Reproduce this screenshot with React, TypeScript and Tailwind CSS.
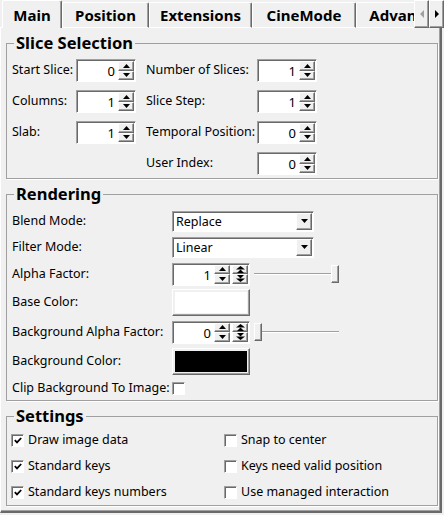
import React from 'react'

const raised =
  'border border-t-white border-l-white border-b-[#696969] border-r-[#696969] shadow-[inset_-1px_-1px_0_#a0a0a0] bg-[#f0f0f0]'
const sunken =
  'border border-t-[#a0a0a0] border-l-[#a0a0a0] border-b-white border-r-white shadow-[inset_1px_1px_0_#696969]'

function Tri({ dir, color = '#000' }: { dir: 'up' | 'down' | 'left' | 'right'; color?: string }) {
  const pts: Record<string, string> = {
    up: '0,4 7,4 3.5,0',
    down: '0,0 7,0 3.5,4',
    left: '4,0 4,8 0,4',
    right: '0,0 0,8 4,4',
  }
  const vertical = dir === 'up' || dir === 'down'
  return (
    <svg width={vertical ? 7 : 4} height={vertical ? 4 : 8} viewBox={vertical ? '0 0 7 4' : '0 0 4 8'}>
      <polygon points={pts[dir]} fill={color} />
    </svg>
  )
}

function DoubleTri({ dir }: { dir: 'up' | 'down' }) {
  return (
    <svg width="9" height="7" viewBox="0 0 9 7">
      {dir === 'up' ? (
        <>
          <polygon points="0,3.5 9,3.5 4.5,0" fill="#000" />
          <polygon points="1,7 8,7 4.5,3.5" fill="#000" />
        </>
      ) : (
        <>
          <polygon points="0,3.5 9,3.5 4.5,7" fill="#000" />
          <polygon points="1,0 8,0 4.5,3.5" fill="#000" />
        </>
      )}
    </svg>
  )
}

function SpinButtons({ double = false }: { double?: boolean }) {
  return (
    <div className="flex flex-col w-[16px] h-full">
      <div className={`flex-1 flex items-center justify-center ${raised}`}>
        {double ? <DoubleTri dir="up" /> : <Tri dir="up" />}
      </div>
      <div className={`flex-1 flex items-center justify-center ${raised}`}>
        {double ? <DoubleTri dir="down" /> : <Tri dir="down" />}
      </div>
    </div>
  )
}

function Spin({ value, double = false }: { value: string; double?: boolean }) {
  return (
    <div className={`flex h-[23px] bg-white ${sunken} ${double ? 'w-[78px]' : 'w-[60px]'}`}>
      <div className="flex-1 text-right pr-[3px] pt-[1px] leading-[20px] text-[13px]">{value}</div>
      <div className="flex gap-[2px] py-[1px] pr-[1px]">
        <SpinButtons />
        {double && <SpinButtons double />}
      </div>
    </div>
  )
}

function Slider({ at }: { at: 'start' | 'end' }) {
  const handle = <div className={`w-[8px] h-[18px] shrink-0 ${raised}`} />
  return (
    <div className="flex items-center w-[85px] h-[22px]">
      {at === 'start' && handle}
      <div className="flex-1 h-[2px] border-t border-t-[#a0a0a0] border-b border-b-white" />
      {at === 'end' && handle}
    </div>
  )
}

function Combo({ value }: { value: string }) {
  return (
    <div className={`flex w-[142px] h-[21px] bg-white ${sunken}`}>
      <div className="flex-1 pl-[3px] leading-[19px]">{value}</div>
      <div className="p-[1px]">
        <div className={`w-[16px] h-full flex items-center justify-center ${raised}`}>
          <Tri dir="down" />
        </div>
      </div>
    </div>
  )
}

function ColorButton({ color }: { color: string }) {
  return (
    <div className={`w-[78px] h-[27px] p-[2px] ${raised}`}>
      <div className={`w-full h-full ${color}`} />
    </div>
  )
}

function CheckBox({ checked }: { checked: boolean }) {
  return (
    <div className={`w-[13px] h-[13px] shrink-0 bg-white flex items-center justify-center ${sunken}`}>
      {checked && (
        <svg width="8" height="7" viewBox="0 0 8 7">
          <path d="M0.8 3.2 L3 5.4 L7.2 1" stroke="#000" strokeWidth="1.8" fill="none" />
        </svg>
      )}
    </div>
  )
}

function Group({ title, className, children }: { title: string; className?: string; children: React.ReactNode }) {
  return (
    <fieldset className={`w-[432px] border border-[#a0a0a0] shadow-[1px_1px_0_#fff] ${className ?? ''}`}>
      <legend className="ml-[7px] px-[2px] text-[16.5px] leading-[20px] font-bold">{title}</legend>
      {children}
    </fieldset>
  )
}

const tabs = [
  { label: 'Main', w: 'w-[60px]' },
  { label: 'Position', w: 'w-[87px]' },
  { label: 'Extensions', w: 'w-[103px]' },
  { label: 'CineMode', w: 'w-[104px]' },
  { label: 'Advanced', w: 'w-[100px]' },
]

export default function App() {
  return (
    <div className="w-[444px] h-[515px] bg-[#f0f0f0] text-[12.5px] text-black font-['Noto_Sans',sans-serif] overflow-hidden">
      {/* tab strip */}
      <div className="flex h-[28px]">
        <div className="flex flex-1 items-end overflow-hidden">
          <div className="w-[2px] shrink-0 h-[1px] bg-white" />
          {tabs.map((t, i) =>
            i === 0 ? (
              <div
                key={t.label}
                className={`${t.w} shrink-0 h-[28px] pt-[1px] border-l border-t border-l-white border-t-white border-r border-r-[#696969] rounded-t-[2px] shadow-[inset_-1px_0_0_#a0a0a0] flex items-center justify-center text-[15px] font-bold`}
              >
                {t.label}
              </div>
            ) : (
              <div
                key={t.label}
                className={`${t.w} shrink-0 h-[26px] pt-[1px] border-l border-t border-l-white border-t-white border-r border-r-[#696969] border-b border-b-white rounded-t-[2px] shadow-[inset_-1px_0_0_#a0a0a0] flex items-center justify-center text-[15px] font-bold`}
              >
                {t.label}
              </div>
            ),
          )}
        </div>
        <div className="flex h-[28px]">
          <div className={`w-[15px] h-full flex items-center justify-center ${raised}`}>
            <Tri dir="left" color="#a0a0a0" />
          </div>
          <div className={`w-[15px] h-full flex items-center justify-center ${raised}`}>
            <Tri dir="right" />
          </div>
        </div>
      </div>

      {/* panel */}
      <div className="w-[442px] h-[485px] border-l border-l-white border-r-2 border-r-[#696969] border-b-2 border-b-[#696969] shadow-[inset_-1px_-1px_0_#a0a0a0] pl-[5px] pt-[5px]">
        <Group title="Slice Selection">
          <div className="flex flex-col gap-[8px] pl-[5px] pt-[6px] pb-[3px]">
            {[
              ['Start Slice:', '0', 'Number of Slices:', '1'],
              ['Columns:', '1', 'Slice Step:', '1'],
              ['Slab:', '1', 'Temporal Position:', '0'],
              ['', '', 'User Index:', '0'],
            ].map(([l1, v1, l2, v2]) => (
              <div key={l2} className="flex items-center h-[23px]">
                <div className="w-[64px]">{l1}</div>
                <div className="w-[60px]">{l1 && <Spin value={v1} />}</div>
                <div className="w-[111px] ml-[10px]">{l2}</div>
                <Spin value={v2} />
              </div>
            ))}
          </div>
        </Group>

        <Group title="Rendering" className="mt-[5px]">
          <div className="flex flex-col pl-[5px] pt-[6px] pb-[4px]">
            <div className="flex items-center h-[22px]">
              <div className="w-[160px]">Blend Mode:</div>
              <Combo value="Replace" />
            </div>
            <div className="flex items-center h-[22px] mt-[4px]">
              <div className="w-[160px]">Filter Mode:</div>
              <Combo value="Linear" />
            </div>
            <div className="flex items-center h-[22px] mt-[5px]">
              <div className="w-[160px]">Alpha Factor:</div>
              <Spin value="1" double />
              <div className="ml-[4px]">
                <Slider at="end" />
              </div>
            </div>
            <div className="flex items-center h-[27px] mt-[4px]">
              <div className="w-[160px]">Base Color:</div>
              <ColorButton color="bg-white" />
            </div>
            <div className="flex items-center h-[22px] mt-[5px]">
              <div className="w-[160px]">Background Alpha Factor:</div>
              <Spin value="0" double />
              <div className="ml-[4px]">
                <Slider at="start" />
              </div>
            </div>
            <div className="flex items-center h-[27px] mt-[5px]">
              <div className="w-[160px]">Background Color:</div>
              <ColorButton color="bg-black" />
            </div>
            <div className="flex items-center h-[16px] mt-[5px]">
              <div className="w-[160px] whitespace-nowrap">Clip Background To Image:</div>
              <CheckBox checked={false} />
            </div>
          </div>
        </Group>

        <Group title="Settings" className="mt-[5px]">
          <div className="grid grid-cols-[213px_1fr] gap-y-[6px] pl-[4px] pt-[4px] pb-[3px]">
            {[
              ['Draw image data', true],
              ['Snap to center', false],
              ['Standard keys', true],
              ['Keys need valid position', false],
              ['Standard keys numbers', true],
              ['Use managed interaction', false],
            ].map(([label, checked]) => (
              <div key={label as string} className="flex items-center gap-[4px] h-[20px]">
                <CheckBox checked={checked as boolean} />
                <span>{label as string}</span>
              </div>
            ))}
          </div>
        </Group>
      </div>
    </div>
  )
}
